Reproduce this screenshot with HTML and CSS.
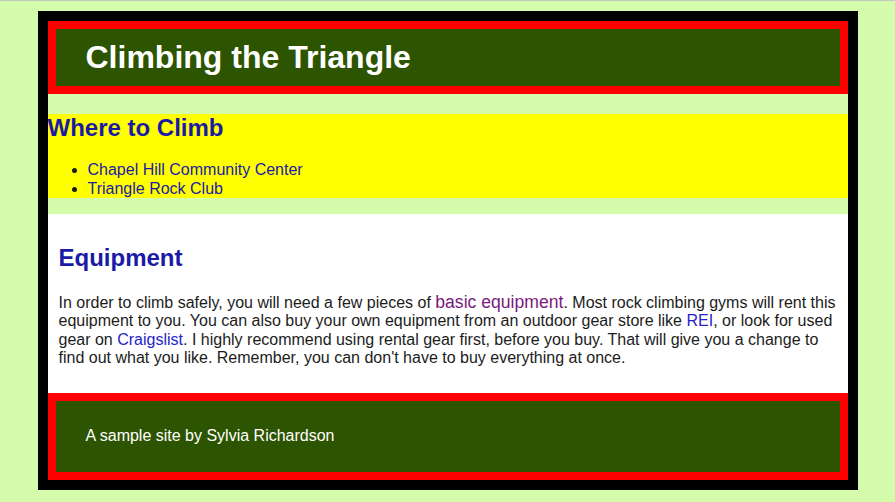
FILE: index.html
```html
<!DOCTYPE html>
<html lang="en">
<head>
<meta charset="utf-8">
<title>Climbing the Triangle</title>
<link rel="stylesheet" href="styles.css">
</head>
<body>
<div class="wrapper">
  <header class="site-header">
    <h1>Climbing the Triangle</h1>
  </header>
  <section class="where">
    <h2>Where to Climb</h2>
    <ul>
      <li><a href="#">Chapel Hill Community Center</a></li>
      <li><a href="#">Triangle Rock Club</a></li>
    </ul>
  </section>
  <section class="equipment">
    <h2>Equipment</h2>
    <p>In order to climb safely, you will need a few pieces of <a class="visited" href="#">basic equipment</a>. Most rock climbing gyms will rent this equipment to you. You can also buy your own equipment from an outdoor gear store like <a class="ext" href="#">REI</a>, or look for used gear on <a class="ext" href="#">Craigslist</a>. I highly recommend using rental gear first, before you buy. That will give you a change to find out what you like. Remember, you can don't have to buy everything at once.</p>
  </section>
  <footer class="site-footer">
    <p>A sample site by Sylvia Richardson</p>
  </footer>
</div>
</body>
</html>
```
FILE: styles.css
```css
html {
  background: #d4fcaa;
  border-top: 1px solid #c4c8c0;
}
body {
  margin: 10px 8px;
  font-family: "Liberation Sans", Arial, sans-serif;
  font-size: 16px;
  line-height: 1.15;
  color: #1c1c1c;
}
.wrapper {
  width: 800px;
  margin: 0 auto;
  border: 10px solid #000;
}
.site-header {
  background: #2d5400;
  border: 8px solid #ff0000;
  padding: 10px 30px;
}
.site-header h1 {
  margin: 0;
  font-size: 32px;
  color: #fff;
}
h2 {
  font-size: 24px;
  color: #1a1aa6;
  margin: 20px 0;
}
.where {
  background: #ffff00;
}
.where ul {
  margin: 16px 0;
  padding-left: 40px;
}
.where a {
  color: #1a1aa6;
  text-decoration: none;
}
.equipment {
  background: #fff;
  padding: 10px 10px 10px 11px;
}
.equipment p {
  margin: 16px 0;
}
.equipment a {
  text-decoration: none;
}
.equipment a.visited {
  color: #7a1a7e;
  font-size: 1.1em;
}
.equipment a.ext {
  color: #2424c8;
}
.site-footer {
  background: #2d5400;
  border: 8px solid #ff0000;
  padding: 10px 30px;
  color: #fff;
}
.site-footer p {
  margin: 16px 0;
}
```
